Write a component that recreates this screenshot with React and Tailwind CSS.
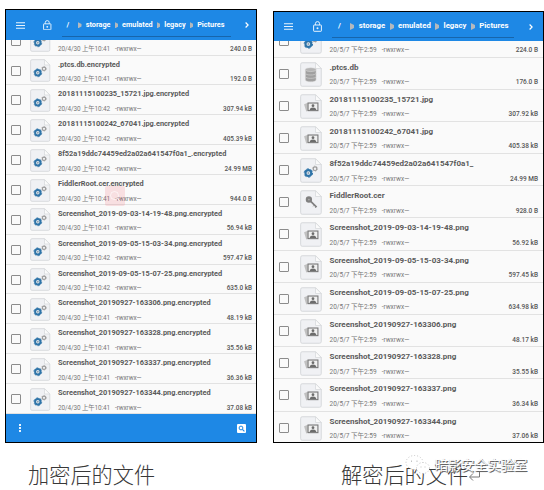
const leftFiles = [
  ['.ptcs.db.encrypted', '20/4/30 上午10:41', '192.0 B', 'gear'],
  ['20181115100235_15721.jpg.encrypted', '20/4/30 上午10:42', '307.94 kB', 'gear'],
  ['20181115100242_67041.jpg.encrypted', '20/4/30 上午10:42', '405.39 kB', 'gear'],
  ['8f52a19ddc74459ed2a02a641547f0a1_.encrypted', '20/4/30 上午10:42', '24.99 MB', 'gear'],
  ['FiddlerRoot.cer.encrypted', '20/4/30 上午10:41', '944.0 B', 'gear'],
  ['Screenshot_2019-09-03-14-19-48.png.encrypted', '20/4/30 上午10:41', '56.94 kB', 'gear'],
  ['Screenshot_2019-09-05-15-03-34.png.encrypted', '20/4/30 上午10:42', '597.47 kB', 'gear'],
  ['Screenshot_2019-09-05-15-07-25.png.encrypted', '20/4/30 上午10:42', '635.0 kB', 'gear'],
  ['Screenshot_20190927-163306.png.encrypted', '20/4/30 上午10:41', '48.19 kB', 'gear'],
  ['Screenshot_20190927-163328.png.encrypted', '20/4/30 上午10:41', '35.56 kB', 'gear'],
  ['Screenshot_20190927-163337.png.encrypted', '20/4/30 上午10:41', '36.36 kB', 'gear'],
  ['Screenshot_20190927-163344.png.encrypted', '20/4/30 上午10:41', '37.08 kB', 'gear'],
];

const rightFiles = [
  ['.ptcs.db', '20/5/7 下午2:59', '176.0 B', 'db'],
  ['20181115100235_15721.jpg', '20/5/7 下午2:59', '307.92 kB', 'image'],
  ['20181115100242_67041.jpg', '20/5/7 下午2:59', '405.38 kB', 'image'],
  ['8f52a19ddc74459ed2a02a641547f0a1_', '20/5/7 下午2:59', '24.99 MB', 'gear'],
  ['FiddlerRoot.cer', '20/5/7 下午2:59', '928.0 B', 'key'],
  ['Screenshot_2019-09-03-14-19-48.png', '20/5/7 下午2:59', '56.92 kB', 'image'],
  ['Screenshot_2019-09-05-15-03-34.png', '20/5/7 下午2:59', '597.45 kB', 'image'],
  ['Screenshot_2019-09-05-15-07-25.png', '20/5/7 下午2:59', '634.98 kB', 'image'],
  ['Screenshot_20190927-163306.png', '20/5/7 下午2:59', '48.17 kB', 'image'],
  ['Screenshot_20190927-163328.png', '20/5/7 下午2:59', '35.55 kB', 'image'],
  ['Screenshot_20190927-163337.png', '20/5/7 下午2:59', '36.34 kB', 'image'],
  ['Screenshot_20190927-163344.png', '20/5/7 下午2:59', '37.06 kB', 'image'],
];

function Glyph({ kind }) {
  if (kind === 'db')
    return (
      <g fill="#a0a0a0" stroke="#dedede" strokeWidth="0.5">
        <path d="M5 13.600v3c0 2.200 10 2.200 10 0v-3z" />
        <path d="M5 10.400v3c0 2.200 10 2.200 10 0v-3z" />
        <path d="M5 7v3.300c0 2.200 10 2.200 10 0V7z" />
        <ellipse cx="10" cy="7" rx="5" ry="1.8" fill="#b4b4b4" />
      </g>
    );
  if (kind === 'key')
    return (
      <g fill="none" stroke="#808080">
        <circle cx="8.300" cy="8.800" r="1.900" strokeWidth="2.100" fill="#aaa" />
        <path d="M10 10.500l5.500 5.300" strokeWidth="1.600" />
        <path d="M13.300 14l-1 1M15 15.500l-.8.8" strokeWidth="0.900" />
      </g>
    );
  if (kind === 'image')
    return (
      <g>
        <path d="M3.800 9.500l3.500-1.500v7.500l-1.500.5z" fill="#c0c0c0" />
        <rect x="7.500" y="8.300" width="9.200" height="7" fill="#f0f0f0" stroke="#777" strokeWidth="1" />
        <circle cx="12.100" cy="10.700" r="1.300" fill="#6c6c6c" />
        <path d="M9 14.700c.2-3 6-3 6.200 0z" fill="#6c6c6c" />
      </g>
    );
  return (
    <g fill="none">
      <circle cx="7.800" cy="13.800" r="2.700" stroke="#2f74a8" strokeWidth="2" />
      <circle cx="7.800" cy="13.800" r="3.900" stroke="#2f74a8" strokeWidth="0.900" strokeDasharray="2.040 2.040" />
      <circle cx="7.800" cy="13.800" r="1" fill="#8ba3b5" />
      <circle cx="14" cy="9.800" r="1.700" stroke="#9a9a9a" strokeWidth="1.100" />
      <circle cx="14" cy="9.800" r="2.400" stroke="#9a9a9a" strokeWidth="0.500" strokeDasharray="1.250 1.250" />
    </g>
  );
}

function FileIcon({ kind, className }) {
  return (
    <svg viewBox="0 0 20.500 23" className={className} preserveAspectRatio="none">
      <path d="M2 .7h12.500l5.300 5.300v14.800q0 1.500-1.500 1.500H2Q.6 22.300.6 20.800V2.200Q.6.700 2 .700z" fill="#f0f1f4" stroke="#d6d8db" strokeWidth="0.900" />
      <path d="M14.500.7V6h5.300z" fill="#fbfbfb" stroke="#d6d8db" strokeWidth="0.700" />
      <Glyph kind={kind} />
    </svg>
  );
}

function Row({ file, wide }) {
  const [name, date, size, kind] = file;
  return (
    <div
      className={
        wide
          ? 'flex h-[32.2px] shrink-0 border-b border-[#e2e2e2] pl-[5px] pr-[5px]'
          : 'flex h-[29.87px] shrink-0 border-b border-[#e2e2e2] pl-[5px] pr-[4px]'
      }
    >
      <div
        className={
          wide
            ? 'mt-[11px] size-[10px] shrink-0 rounded-[1px] border-[1.5px] border-[#8c8c8c]'
            : 'mt-[10px] size-[10px] shrink-0 rounded-[1px] border-[1.5px] border-[#8c8c8c]'
        }
      />
      <FileIcon
        kind={kind}
        className={wide ? 'ml-[11px] mt-[4px] h-[25px] w-[22px] shrink-0' : 'ml-[9px] mt-[3.500px] h-[23px] w-[20.5px] shrink-0'}
      />
      <div className="ml-[7.500px] min-w-0 flex-1">
        <div
          className={
            wide
              ? 'mt-[4px] h-[12px] whitespace-nowrap text-[8px] font-bold leading-[12px] tracking-[-0.03px] text-[#5a5a5a]'
              : 'mt-[3px] h-[12px] whitespace-nowrap text-[7.4px] font-bold leading-[12px] tracking-[-0.02px] text-[#5a5a5a]'
          }
        >
          {name}
        </div>
        <div
          className={
            wide
              ? 'mt-[2.500px] flex h-[12px] whitespace-nowrap text-[6.5px] leading-[12px] text-[#777]'
              : 'mt-[2.500px] flex h-[12px] whitespace-nowrap text-[6.4px] leading-[12px] tracking-[-0.1px] text-[#777]'
          }
        >
          <span>{date}</span>
          <span className="ml-[5px]">-rwxrwx—</span>
          <span className="ml-auto font-medium tracking-normal text-[#555]">{size}</span>
        </div>
      </div>
    </div>
  );
}

function Crumb({ children, wide }) {
  return (
    <>
      <svg viewBox="0 0 4 7" className={wide ? 'ml-[4.400px] mr-[4.400px] h-[7px] w-[4px]' : 'ml-[4px] mr-[4px] h-[6.500px] w-[3.500px]'}>
        <path d="M0 0L4 2v3L0 7z" fill="#b5b9bd" />
      </svg>
      <span>{children}</span>
    </>
  );
}

function Header({ wide }) {
  return (
    <div
      className={
        wide
          ? 'flex h-[29px] shrink-0 items-center bg-[#1e88e5] pl-[10px] text-white'
          : 'flex h-[30px] shrink-0 items-center bg-[#1e88e5] pl-[10px] text-white'
      }
    >
      <svg viewBox="0 0 9 7" className="h-[7px] w-[9px] shrink-0">
        <path d="M0 .7h9M0 3.500h9M0 6.300h9" stroke="#e8f3fd" strokeWidth="1.100" />
      </svg>
      <svg viewBox="0 0 9 11" fill="none" className={wide ? 'ml-[20px] h-[11px] w-[9px] shrink-0' : 'ml-[18px] h-[10.500px] w-[8.500px] shrink-0'}>
        <rect x=".6" y="4" width="7.800" height="6.300" rx=".5" stroke="#e8f3fd" strokeWidth="1" />
        <path d="M2.400 4V2.700a2.100 2.100 0 014.200 0V4" stroke="#e8f3fd" strokeWidth="1" />
        <circle cx="4.500" cy="7.200" r="1" fill="#e8f3fd" />
      </svg>
      <div
        className={
          wide
            ? 'ml-[10px] flex h-[22px] w-[182px] shrink-0 items-center whitespace-nowrap border-b border-[#1765ab] pl-[6px] text-[7.8px] font-bold'
            : 'ml-[10px] mt-px flex h-[23px] w-[169px] shrink-0 items-center whitespace-nowrap border-b border-[#1765ab] pl-[5px] text-[7.3px] font-bold'
        }
      >
        <span className="mr-[5px]">/</span>
        <Crumb wide={wide}>storage</Crumb>
        <Crumb wide={wide}>emulated</Crumb>
        <Crumb wide={wide}>legacy</Crumb>
        <Crumb wide={wide}>Pictures</Crumb>
      </div>
      <svg viewBox="0 0 4 6" fill="none" className={wide ? 'ml-[15px] h-[6px] w-[4px]' : 'ml-[14px] h-[6px] w-[4px]'}>
        <path d="M.6.5L3.100 3 .6 5.500" stroke="white" strokeWidth="1.200" />
      </svg>
    </div>
  );
}

function Panel({ wide, files, first, children }) {
  return (
    <section
      className={
        wide
          ? "ml-[16px] mt-[11px] flex h-[432px] w-[271px] shrink-0 flex-col overflow-hidden border border-black bg-[#fafafa] font-[Roboto,'Noto_Sans_CJK_SC',sans-serif]"
          : "relative ml-[5px] mt-[9px] flex h-[434px] w-[252px] shrink-0 flex-col overflow-hidden border border-black bg-[#fafafa] font-[Roboto,'Noto_Sans_CJK_SC',sans-serif]"
      }
    >
      <Header wide={wide} />
      <div className={wide ? 'flex h-[16.500px] shrink-0 flex-col justify-end overflow-hidden' : 'flex h-[15.600px] shrink-0 flex-col justify-end overflow-hidden'}>
        <Row wide={wide} file={first} />
      </div>
      <div className="flex min-h-0 flex-1 flex-col overflow-hidden">
        {files.map((file) => (
          <Row key={file[0]} wide={wide} file={file} />
        ))}
      </div>
      {children}
    </section>
  );
}

export default function App() {
  return (
    <main className="h-[490px] w-[544px] overflow-hidden bg-white">
      <div className="flex h-[443px]">
        <Panel files={leftFiles} first={['', '20/4/30 上午10:41', '240.0 B', 'gear']}>
          <div className="flex h-[28px] shrink-0 items-center justify-between bg-[#1e88e5] pl-[13px] pr-[10px]">
            <svg viewBox="0 0 2 8" className="h-[8px] w-[2px]">
              <path d="M0 0h2v2H0zM0 3h2v2H0zM0 6h2v2H0z" fill="#e8f3fd" />
            </svg>
            <svg viewBox="0 0 9 9" className="h-[9px] w-[9px]" fill="none">
              <rect width="9" height="9" rx="1" fill="white" />
              <circle cx="4" cy="4" r="1.900" stroke="#1e88e5" strokeWidth="1" />
              <path d="M5.400 5.400l2 2" stroke="#1e88e5" strokeWidth="1.100" />
            </svg>
          </div>
          <div className="absolute left-[99px] top-[176px] flex size-[20px] items-center justify-center rounded-[2px] bg-[#f04a55]/15">
            <svg viewBox="0 0 12 12" className="size-[12px]" fill="none" stroke="white" strokeOpacity="0.600">
              <circle cx="5.500" cy="5.500" r="4" />
              <path d="M8.500 8.500l2.500 2.500" />
            </svg>
          </div>
        </Panel>
        <Panel wide files={rightFiles} first={['', '20/5/7 下午2:59', '224.0 B', 'gear']} />
      </div>
      <div className="relative flex h-[47px] pt-[17px] font-['Noto_Sans_CJK_SC',sans-serif] text-[21.2px] font-light leading-[28px] text-[#383838]">
        <span className="ml-[28px] w-[313px]">加密后的文件</span>
        <span>解密后的文件</span>
        <svg viewBox="0 0 13 12" className="mt-[10px] h-[12px] w-[13px]" fill="none" stroke="#777">
          <path d="M11.500 1v6H2M5 3.500L1.500 7 5 10.500" />
        </svg>
        <div className="absolute left-[404px] top-[11px] flex items-center">
          <svg viewBox="0 0 27 22" className="h-[22px] w-[27px]" stroke="#aaa" strokeWidth="0.700" strokeDasharray="1 2">
            <ellipse cx="10.500" cy="8.500" rx="8.500" ry="7" fill="white" />
            <ellipse cx="19" cy="14" rx="6.500" ry="5.500" fill="white" />
            <path d="M7.500 6.500v1.500M13 6.500v1.500M17 12.500v1M21 12.500v1" strokeDasharray="none" />
          </svg>
          <span className="ml-[4px] text-[13.2px] font-normal leading-[22px] text-white [text-shadow:1px_1px_0_#666,0_1px_1px_#999]">暗影安全实验室</span>
        </div>
      </div>
    </main>
  );
}
